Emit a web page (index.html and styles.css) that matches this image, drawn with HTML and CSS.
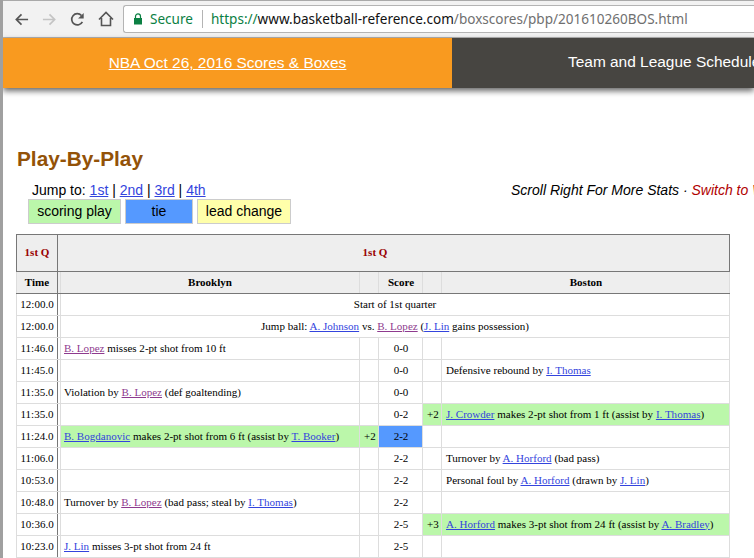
FILE: index.html
```html
<!DOCTYPE html>
<html lang="en">
<head>
    <meta charset="UTF-8">
    <meta name="viewport" content="width=device-width, initial-scale=1.0">
    <title>Play-By-Play</title>
    <link rel="stylesheet" href="styles.css">
</head>
<body>
    <div class="toolbar">
        <svg class="tool-icon" viewBox="0 0 16 16"><path d="M15 8H3M8 2.5 2.5 8 8 13.5" fill="none" stroke="#555" stroke-width="1.8"/></svg>
        <svg class="tool-icon" viewBox="0 0 16 16"><path d="M1 8h12M8 2.5 13.5 8 8 13.5" fill="none" stroke="#c4c4c4" stroke-width="1.8"/></svg>
        <svg class="tool-icon" viewBox="0 0 16 16"><path d="M13.2 10.5A6 6 0 1 1 12.2 3.7" fill="none" stroke="#555" stroke-width="1.8"/><path d="M14.6 1v6h-6z" fill="#555"/></svg>
        <svg class="tool-icon" viewBox="0 0 16 16"><path d="M1 8.5 8 1.5l7 7M3.5 7v7.5h9V7" fill="none" stroke="#555" stroke-width="1.6"/></svg>
        <div class="omnibox">
            <svg class="lock" viewBox="0 0 10 12"><path d="M2.5 5V3.4a2.5 2.5 0 0 1 5 0V5" fill="none" stroke="#0b8043" stroke-width="1.2"/><rect x="1" y="5" width="8" height="6.5" fill="#0b8043"/></svg>
            <span class="secure">Secure</span>
            <span class="url"><span class="scheme">https://</span><span class="host">www.basketball-reference.com</span>/boxscores/pbp/201610260BOS.html</span>
        </div>
    </div>

    <div class="page">
        <nav class="topnav">
            <a class="nav-scores" href="#">NBA Oct 26, 2016 Scores &amp; Boxes</a>
            <div class="nav-schedule">Team and League Schedules</div>
        </nav>

        <div class="content">
            <h1>Play-By-Play</h1>
            <div class="jump-row">
                <div class="jump">Jump to: <a href="#">1st</a> | <a href="#">2nd</a> | <a href="#">3rd</a> | <a href="#">4th</a></div>
                <div class="scroll-note">Scroll Right For More Stats · <span class="switch">Switch to Widescreen</span></div>
            </div>
            <div class="legend">
                <div class="key key-score">scoring play</div>
                <div class="key key-tie">tie</div>
                <div class="key key-lead">lead change</div>
            </div>

            <table class="pbp">
                <colgroup>
                    <col class="c-time"><col class="c-play"><col class="c-pts"><col class="c-score"><col class="c-pts"><col>
                </colgroup>
                <tr class="quarter">
                    <th>1st Q</th>
                    <th colspan="5"><span class="quarter-title">1st Q</span></th>
                </tr>
                <tr class="heads">
                    <th>Time</th><th>Brooklyn</th><th></th><th>Score</th><th></th><th>Boston</th>
                </tr>
                <tr><td>12:00.0</td><td class="center" colspan="5">Start of 1st quarter</td></tr>
                <tr><td>12:00.0</td><td class="center" colspan="5">Jump ball: <a href="#">A. Johnson</a> vs. <a href="#" class="seen">B. Lopez</a> (<a href="#">J. Lin</a> gains possession)</td></tr>
                <tr><td>11:46.0</td><td><a href="#" class="seen">B. Lopez</a> misses 2-pt shot from 10 ft</td><td></td><td class="center">0-0</td><td></td><td></td></tr>
                <tr><td>11:45.0</td><td></td><td></td><td class="center">0-0</td><td></td><td>Defensive rebound by <a href="#">I. Thomas</a></td></tr>
                <tr><td>11:35.0</td><td>Violation by <a href="#" class="seen">B. Lopez</a> (def goaltending)</td><td></td><td class="center">0-0</td><td></td><td></td></tr>
                <tr><td>11:35.0</td><td></td><td></td><td class="center">0-2</td><td class="scored">+2</td><td class="scored"><a href="#">J. Crowder</a> makes 2-pt shot from 1 ft (assist by <a href="#">I. Thomas</a>)</td></tr>
                <tr><td>11:24.0</td><td class="scored"><a href="#">B. Bogdanovic</a> makes 2-pt shot from 6 ft (assist by <a href="#">T. Booker</a>)</td><td class="scored">+2</td><td class="center tied">2-2</td><td></td><td></td></tr>
                <tr><td>11:06.0</td><td></td><td></td><td class="center">2-2</td><td></td><td>Turnover by <a href="#">A. Horford</a> (bad pass)</td></tr>
                <tr><td>10:53.0</td><td></td><td></td><td class="center">2-2</td><td></td><td>Personal foul by <a href="#">A. Horford</a> (drawn by <a href="#">J. Lin</a>)</td></tr>
                <tr><td>10:48.0</td><td>Turnover by <a href="#" class="seen">B. Lopez</a> (bad pass; steal by <a href="#">I. Thomas</a>)</td><td></td><td class="center">2-2</td><td></td><td></td></tr>
                <tr><td>10:36.0</td><td></td><td></td><td class="center">2-5</td><td class="scored">+3</td><td class="scored"><a href="#">A. Horford</a> makes 3-pt shot from 24 ft (assist by <a href="#">A. Bradley</a>)</td></tr>
                <tr><td>10:23.0</td><td><a href="#">J. Lin</a> misses 3-pt shot from 24 ft</td><td></td><td class="center">2-5</td><td></td><td></td></tr>
                <tr><td></td><td></td><td></td><td></td><td></td><td></td></tr>
            </table>
        </div>
    </div>
</body>
</html>
```

FILE: styles.css
```css
html, body {
    height: 100%;
    overflow: hidden;
}

body {
    margin: 0;
    background-color: #fff;
    font-family: "Liberation Sans", Arial, sans-serif;
    color: #000;
    border-left: 3px solid #a0a0a0;
}

.toolbar {
    height: 38px;
    box-sizing: border-box;
    display: flex;
    align-items: center;
    gap: 13px;
    padding: 0 0 0 11px;
    background-color: #f2f2f2;
    border-top: 1px solid #a9a9a9;
    border-bottom: 1px solid #b4b4b4;
}

.tool-icon {
    width: 15px;
    height: 15px;
    flex: none;
}

.tool-icon:last-of-type {
    width: 16px;
    height: 16px;
}

.omnibox {
    flex: 1;
    height: 28px;
    box-sizing: border-box;
    display: flex;
    align-items: center;
    white-space: nowrap;
    overflow: hidden;
    margin-left: -4px;
    padding-left: 9px;
    background-color: #fff;
    border: 1px solid #b4b4b4;
    border-right: 0;
    border-radius: 3px 0 0 3px;
    font-family: "Noto Sans", sans-serif;
    font-size: 13.55px;
    color: #6f6f6f;
}

.lock {
    width: 10px;
    height: 12px;
    margin-right: 7px;
}

.secure {
    color: #0b8043;
    padding-right: 9px;
    margin-right: 8px;
    border-right: 1px solid #b4b4b4;
}

.scheme {
    color: #0b8043;
}

.host {
    color: #111;
}

.topnav {
    display: flex;
    height: 50px;
    box-shadow: 0 3px 6px rgba(0, 0, 0, 0.6);
    font-size: 15.45px;
}

.nav-scores {
    width: 449px;
    flex: none;
    line-height: 49px;
    text-align: center;
    background-color: #f99a1f;
    color: #fff;
}

.nav-schedule {
    flex: 1;
    padding: 0 0 0 116px;
    line-height: 47px;
    white-space: nowrap;
    overflow: hidden;
    background-color: #474541;
    color: #fff;
}

.content {
    padding: 59px 0 0 13px;
}

h1 {
    margin: 0 0 0 1px;
    font-size: 20.8px;
    line-height: 24px;
    color: #935208;
}

.jump-row {
    display: flex;
    justify-content: space-between;
    margin-top: 11px;
    padding-left: 16px;
    font-size: 14px;
    line-height: 16px;
    white-space: nowrap;
}

.jump a {
    color: #3344dd;
}

.scroll-note {
    width: 243px;
    overflow: hidden;
    font-style: italic;
}

.switch {
    color: #b00000;
}

.legend {
    display: flex;
    gap: 4px;
    margin: 1px 0 10px 12px;
}

.key {
    height: 25px;
    box-sizing: border-box;
    border: 1px solid #ccc;
    font-size: 14px;
    line-height: 23px;
    text-align: center;
}

.key-score {
    width: 93px;
    background-color: #bbf7aa;
}

.key-tie {
    width: 68px;
    background-color: #5599ff;
}

.key-lead {
    width: 94px;
    background-color: #ffffaa;
}

.pbp {
    width: 714px;
    table-layout: fixed;
    border-collapse: collapse;
    font-family: "Liberation Serif", "Times New Roman", serif;
    font-size: 11.04px;
    border: 1px solid #777;
}

.c-time {
    width: 41px;
}

.c-play {
    width: 302px;
}

.c-pts {
    width: 19px;
}

.c-score {
    width: 44px;
}

th, td {
    height: 22px;
    padding: 0 3px 2px 4px;
    box-sizing: border-box;
    border: 1px solid #ddd;
    white-space: nowrap;
}

th {
    background-color: #eee;
    text-align: center;
}

td:first-child, th:first-child {
    padding: 0 0 2px;
    border-right: 1px solid #777;
    text-align: center;
}

td:nth-child(2) {
    padding-left: 6px;
    box-shadow: inset 2px 0 0 #fff, inset 3px 0 0 #ddd;
}

.heads th:nth-child(2) {
    padding-left: 6px;
    box-shadow: inset 2px 0 0 #eee, inset 3px 0 0 #ddd;
}

.quarter th {
    height: 37px;
    color: #990000;
    border: 1px solid #777;
}

.quarter-title {
    margin-right: 38px;
}

.heads th {
    border-bottom: 1px solid #777;
}

.center {
    text-align: center;
}

.scored {
    background-color: #bbf7aa;
}

.tied {
    background-color: #5599ff;
}

.pbp a {
    color: #3344dd;
}

.pbp a.seen {
    color: #8e3a8e;
}
```
